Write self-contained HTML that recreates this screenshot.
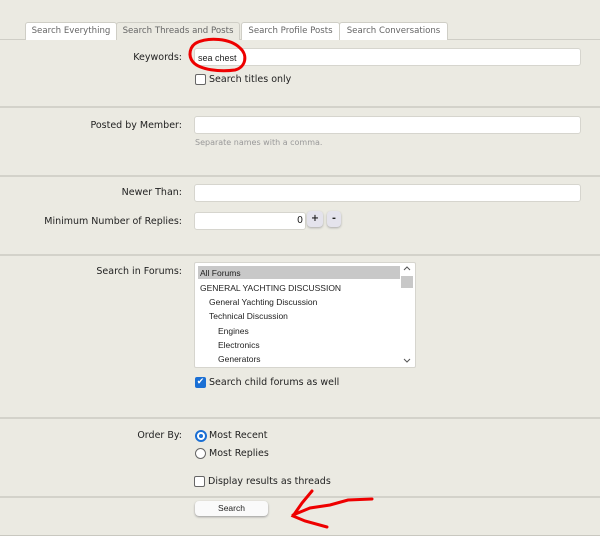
<!DOCTYPE html>
<html><head><style>
body{margin:0;width:600px;height:559px;background:#fff;position:relative;overflow:hidden;font-family:"DejaVu Sans","Liberation Sans",sans-serif;font-size:9.5px;color:#222}
.bg{position:absolute;left:0;top:0;width:600px;height:535px;background:#ebeae2;border-bottom:1px solid #c9c8c0}
.a{position:absolute}
.tab{position:absolute;top:22px;height:17px;border:1px solid #cfcec6;border-bottom:none;background:#fff;color:#666;font-size:8.6px;line-height:17px;text-align:center;border-radius:3px 3px 0 0;white-space:nowrap;overflow:hidden}
.hr{position:absolute;left:0;width:600px;height:0;border-top:2px solid #d3d2ca}
.lab{position:absolute;right:418px;font-size:9.5px;text-align:right;white-space:nowrap}
.inp{position:absolute;background:#fff;border:1px solid #d6d5ce;border-radius:3px;height:16px}
.cb{position:absolute;width:9px;height:9px;border:1px solid #666;border-radius:2px;background:#fff}
.t{position:absolute;font-size:9.5px;white-space:nowrap}
.opt{position:absolute;font-size:8.5px;white-space:nowrap;font-family:"Liberation Sans",sans-serif}
</style></head><body>
<div class="bg"></div>
<div class="hr" style="top:39px;border-top:1px solid #cfcec6"></div>
<div class="tab" style="left:25px;width:90px">Search Everything</div>
<div class="tab" style="left:116px;width:122px;background:#ebeae2">Search Threads and Posts</div>
<div class="tab" style="left:241px;width:97px">Search Profile Posts</div>
<div class="tab" style="left:339px;width:107px">Search Conversations</div>

<div class="lab" style="top:52px">Keywords:</div>
<div class="inp" style="left:194px;top:48px;width:385px"></div>
<div class="opt" style="left:198px;top:53px;font-size:9px">sea chest</div>
<div class="cb" style="left:195px;top:74px"></div>
<div class="t" style="left:209px;top:74px">Search titles only</div>
<div class="hr" style="top:106px"></div>

<div class="lab" style="top:120px">Posted by Member:</div>
<div class="inp" style="left:194px;top:116px;width:385px"></div>
<div class="t" style="left:195px;top:138px;font-size:8px;color:#999">Separate names with a comma.</div>
<div class="hr" style="top:175px"></div>

<div class="lab" style="top:187px">Newer Than:</div>
<div class="inp" style="left:194px;top:184px;width:385px"></div>
<div class="lab" style="top:216px">Minimum Number of Replies:</div>
<div class="inp" style="left:194px;top:212px;width:110px"></div>
<div class="t" style="left:297px;top:215px">0</div>
<div class="a" style="left:307px;top:211px;width:16px;height:16px;background:#e4e3ec;border-radius:4px;text-align:center;line-height:16px;font-weight:bold;box-shadow:0 1px 2px #aaa">+</div>
<div class="a" style="left:327px;top:211px;width:14px;height:16px;background:#e4e3ec;border-radius:4px;text-align:center;line-height:15px;font-weight:bold;box-shadow:0 1px 2px #aaa">-</div>
<div class="hr" style="top:254px"></div>

<div class="lab" style="top:266px">Search in Forums:</div>
<div class="inp" style="left:194px;top:262px;width:220px;height:104px;border-radius:2px"></div>
<div class="a" style="left:198px;top:266px;width:202px;height:13px;background:#c8c8c8"></div>
<div class="a" style="left:401px;top:276px;width:12px;height:12px;background:#c8c8c8"></div>
<svg class="a" style="left:403px;top:265px" width="8" height="8"><path d="M1 5 L4 2 L7 5" fill="none" stroke="#555"/></svg>
<svg class="a" style="left:403px;top:357px" width="8" height="8"><path d="M1 2 L4 5 L7 2" fill="none" stroke="#555"/></svg>
<div class="opt" style="left:200px;top:268px">All Forums</div>
<div class="opt" style="left:200px;top:283px">GENERAL YACHTING DISCUSSION</div>
<div class="opt" style="left:209px;top:297px">General Yachting Discussion</div>
<div class="opt" style="left:209px;top:311px">Technical Discussion</div>
<div class="opt" style="left:218px;top:326px">Engines</div>
<div class="opt" style="left:218px;top:340px">Electronics</div>
<div class="opt" style="left:218px;top:354px">Generators</div>
<div class="a" style="left:195px;top:377px;width:11px;height:11px;background:#1a6fd4;border-radius:2px;color:#fff;font-size:9px;line-height:11px;text-align:center">✔</div>
<div class="t" style="left:209px;top:377px">Search child forums as well</div>
<div class="hr" style="top:417px"></div>

<div class="lab" style="top:430px">Order By:</div>
<div class="a" style="left:195px;top:430px;width:8px;height:8px;border:2px solid #1a6fd4;border-radius:50%;background:#fff"><div style="margin:2px;width:4px;height:4px;border-radius:50%;background:#1a6fd4"></div></div>
<div class="t" style="left:209px;top:430px">Most Recent</div>
<div class="a" style="left:195px;top:448px;width:9px;height:9px;border:1px solid #666;border-radius:50%;background:#fff"></div>
<div class="t" style="left:209px;top:448px">Most Replies</div>
<div class="cb" style="left:194px;top:476px"></div>
<div class="t" style="left:208px;top:476px">Display results as threads</div>
<div class="hr" style="top:496px"></div>
<div class="a" style="left:195px;top:501px;width:73px;height:15px;background:#fafafa;border-radius:4px;box-shadow:0 1px 2px #999;text-align:center;line-height:15px;font-size:8.5px;font-family:'Liberation Sans',sans-serif">Search</div>

<svg class="a" style="left:0;top:0" width="600" height="559">
<path d="M196 43 C208 37,230 38,240 48 C248 55,246 67,235 70 C220 72,200 70,193 62 C188 56,189 46,198 42" fill="none" stroke="#e00" stroke-width="3"/>
<path d="M372 499 L348 500 L330 505 L310 508 L293 515 M312 491 L302 503 L293 516 L305 521 L327 527" fill="none" stroke="#e00" stroke-width="3" stroke-linecap="round"/>
</svg>
</body></html>
